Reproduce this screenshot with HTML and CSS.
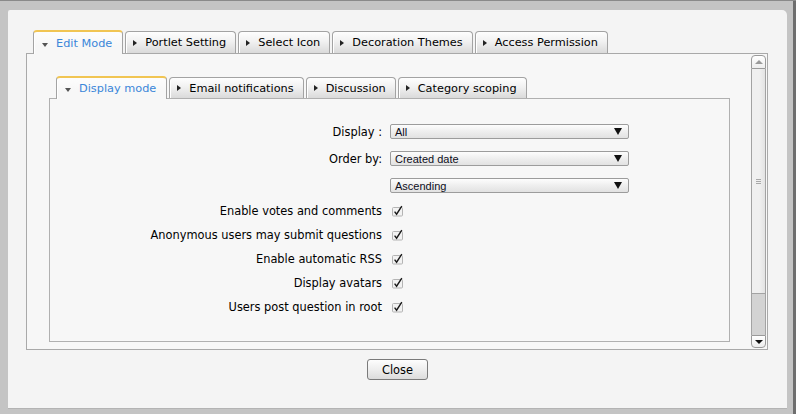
FILE: index.html
```html
<!DOCTYPE html>
<html>
<head>
<meta charset="utf-8">
<title>Edit Mode</title>
<link rel="stylesheet" href="styles.css">
</head>
<body>
<div class="dialog">
  <div class="pane">
    <ul class="tabs tabs-outer">
      <li class="tab active"><span class="arr-d"></span>Edit Mode</li>
      <li class="tab"><span class="arr-r"></span>Portlet Setting</li>
      <li class="tab"><span class="arr-r"></span>Select Icon</li>
      <li class="tab"><span class="arr-r"></span>Decoration Themes</li>
      <li class="tab"><span class="arr-r"></span>Access Permission</li>
    </ul>
    <div class="box outer-box">
      <div class="scroll-content">
        <ul class="tabs tabs-inner">
          <li class="tab active"><span class="arr-d"></span>Display mode</li>
          <li class="tab"><span class="arr-r"></span>Email notifications</li>
          <li class="tab"><span class="arr-r"></span>Discussion</li>
          <li class="tab"><span class="arr-r"></span>Category scoping</li>
        </ul>
        <div class="box inner-box">
          <div class="form">
            <div class="label">Display :</div>
            <div class="select"><span>All</span><span class="sel-arrow"></span></div>

            <div class="label">Order by:</div>
            <div class="select"><span>Created date</span><span class="sel-arrow"></span></div>

            <div class="label"></div>
            <div class="select"><span>Ascending</span><span class="sel-arrow"></span></div>

            <div class="label">Enable votes and comments</div>
            <div class="check"><svg width="12" height="12" viewBox="0 0 12 12"><rect x="0.5" y="2.5" width="10" height="8.5" rx="1" fill="#f2f2f2" stroke="#b4b4b4"/><path d="M2.6 6.6 L4.6 9.2 L9.8 1.2" fill="none" stroke="#1a1a1a" stroke-width="1.4"/></svg></div>

            <div class="label">Anonymous users may submit questions</div>
            <div class="check"><svg width="12" height="12" viewBox="0 0 12 12"><rect x="0.5" y="2.5" width="10" height="8.5" rx="1" fill="#f2f2f2" stroke="#b4b4b4"/><path d="M2.6 6.6 L4.6 9.2 L9.8 1.2" fill="none" stroke="#1a1a1a" stroke-width="1.4"/></svg></div>

            <div class="label">Enable automatic RSS</div>
            <div class="check"><svg width="12" height="12" viewBox="0 0 12 12"><rect x="0.5" y="2.5" width="10" height="8.5" rx="1" fill="#f2f2f2" stroke="#b4b4b4"/><path d="M2.6 6.6 L4.6 9.2 L9.8 1.2" fill="none" stroke="#1a1a1a" stroke-width="1.4"/></svg></div>

            <div class="label">Display avatars</div>
            <div class="check"><svg width="12" height="12" viewBox="0 0 12 12"><rect x="0.5" y="2.5" width="10" height="8.5" rx="1" fill="#f2f2f2" stroke="#b4b4b4"/><path d="M2.6 6.6 L4.6 9.2 L9.8 1.2" fill="none" stroke="#1a1a1a" stroke-width="1.4"/></svg></div>

            <div class="label">Users post question in root</div>
            <div class="check"><svg width="12" height="12" viewBox="0 0 12 12"><rect x="0.5" y="2.5" width="10" height="8.5" rx="1" fill="#f2f2f2" stroke="#b4b4b4"/><path d="M2.6 6.6 L4.6 9.2 L9.8 1.2" fill="none" stroke="#1a1a1a" stroke-width="1.4"/></svg></div>
          </div>
        </div>
      </div>
      <div class="scrollbar">
        <div class="sb-btn sb-up"><span class="tri-up"></span></div>
        <div class="sb-thumb"><span class="grip"></span></div>
        <div class="sb-track"></div>
        <div class="sb-btn sb-down"><span class="tri-down"></span></div>
      </div>
    </div>
  </div>
  <div class="actions">
    <button class="btn">Close</button>
  </div>
</div>
</body>
</html>
```

FILE: styles.css
```css
html, body {
  margin: 0;
  height: 100%;
}
body {
  background: #c4c4c4;
  font-family: "DejaVu Sans", "Liberation Sans", sans-serif;
  font-size: 11px;
  color: #000;
  overflow: hidden;
  box-shadow: inset 0 1px 0 #8a8a8a, inset -3px 0 0 #6e6e6e;
}
.dialog {
  box-sizing: border-box;
  margin: 10px 0 0 8px;
  width: 779px;
  height: 398px;
  background: #f4f4f4;
  border-radius: 2px 5px 0 0;
  padding-top: 20px;
  box-shadow: 0 1px 0 #b3b3b3;
}
.pane {
  width: 742px;
  margin-left: 18px;
}
.tabs {
  display: flex;
  align-items: flex-end;
  margin: 0;
  padding: 0 0 0 7px;
  list-style: none;
  font-size: 11.3px;
}
.tabs-outer { height: 23px; }
.tabs-inner { height: 22px; }
.tab {
  box-sizing: border-box;
  display: flex;
  align-items: center;
  height: 22px;
  padding: 0 9px 0 7px;
  margin-right: 2px;
  border: 1px solid #a3a3a3;
  border-bottom: 0;
  border-radius: 4px 4px 0 0;
  background: linear-gradient(#fefefe, #f1f1f1 45%, #dadada);
  box-shadow: inset 1px 0 0 #fff;
  white-space: nowrap;
  color: #000;
}
.tabs-inner .tab { height: 21px; }
.tab.active {
  height: 24px;
  margin-bottom: -1px;
  padding-right: 10px;
  border-top: 2px solid #f1c553;
  background: linear-gradient(#fdfdfd, #f7f7f7 60%);
  color: #3a86d9;
  position: relative;
  z-index: 1;
}
.tabs-inner .tab.active { height: 23px; }
.arr-r {
  width: 0;
  height: 0;
  border-left: 4px solid #222;
  border-top: 3px solid transparent;
  border-bottom: 3px solid transparent;
  margin-right: 8px;
}
.arr-d {
  width: 0;
  height: 0;
  border-top: 4px solid #555;
  border-left: 3px solid transparent;
  border-right: 3px solid transparent;
  margin: 3px 8px 0 1px;
}
.box {
  box-sizing: border-box;
  border: 1px solid #a9a9a9;
  background: #f7f7f7;
}
.outer-box {
  height: 297px;
  display: flex;
}
.scroll-content {
  flex: 1;
  overflow: hidden;
  padding: 22px 21px 0 22px;
}
.inner-box {
  height: 244px;
  border-color: #b0b0b0;
}
.form {
  display: grid;
  grid-template-columns: 332px 239px;
  grid-template-rows: 27px 27px 27px repeat(5, 24px);
  column-gap: 8px;
  align-items: center;
  padding-top: 19px;
}
.label {
  text-align: right;
  color: #000;
  white-space: nowrap;
  font-size: 11.4px;
}
.select {
  box-sizing: border-box;
  height: 15px;
  display: flex;
  align-items: center;
  justify-content: space-between;
  padding: 0 6px 0 4px;
  border: 1px solid #9c9c9c;
  border-radius: 2px;
  background: linear-gradient(#fdfdfd, #ededed 55%, #e2e2e2);
  font-family: "Liberation Sans", Arial, sans-serif;
  font-size: 11px;
  color: #0d0d1a;
}
.sel-arrow {
  width: 0;
  height: 0;
  border-top: 7px solid #111;
  border-left: 4px solid transparent;
  border-right: 4px solid transparent;
}
.check {
  display: flex;
  align-items: center;
  padding-left: 2px;
  height: 12px;
}
.check svg { display: block; }
.scrollbar {
  box-sizing: border-box;
  width: 15px;
  margin: 1px 1px 1px 0;
  display: flex;
  flex-direction: column;
}
.sb-btn {
  box-sizing: border-box;
  height: 14px;
  border: 1px solid #9a9a9a;
  background: linear-gradient(#ffffff, #ededed);
  display: flex;
  align-items: center;
  justify-content: center;
}
.sb-up { border-radius: 4px 4px 0 0; }
.sb-down {
  height: 13px;
  border-radius: 0 0 4px 4px;
}
.tri-up {
  width: 0;
  height: 0;
  border-bottom: 4px solid #9a9a9a;
  border-left: 4px solid transparent;
  border-right: 4px solid transparent;
}
.tri-down {
  width: 0;
  height: 0;
  border-top: 4px solid #111;
  border-left: 4px solid transparent;
  border-right: 4px solid transparent;
}
.sb-thumb {
  box-sizing: border-box;
  height: 225px;
  border: 1px solid #a3a3a3;
  border-top: 0;
  background: linear-gradient(to right, #f0f0f0 55%, #e3e3e3);
  display: flex;
  align-items: center;
  justify-content: center;
}
.grip {
  width: 5px;
  height: 5px;
  background: repeating-linear-gradient(#a8a8a8 0 1px, transparent 1px 2px);
}
.sb-track {
  flex: 1;
  box-sizing: border-box;
  background: #d3d3d3;
  border-left: 1px solid #a3a3a3;
  border-right: 1px solid #a3a3a3;
}
.actions {
  display: flex;
  justify-content: center;
  margin-top: 9px;
}
.btn {
  box-sizing: border-box;
  width: 61px;
  height: 21px;
  padding: 0;
  border: 1px solid #7a7a7a;
  border-radius: 3px;
  background: linear-gradient(#fdfdfd, #eeeeee 50%, #dcdcdc);
  font-family: "DejaVu Sans", "Liberation Sans", sans-serif;
  font-size: 11.4px;
  color: #000;
}
```
